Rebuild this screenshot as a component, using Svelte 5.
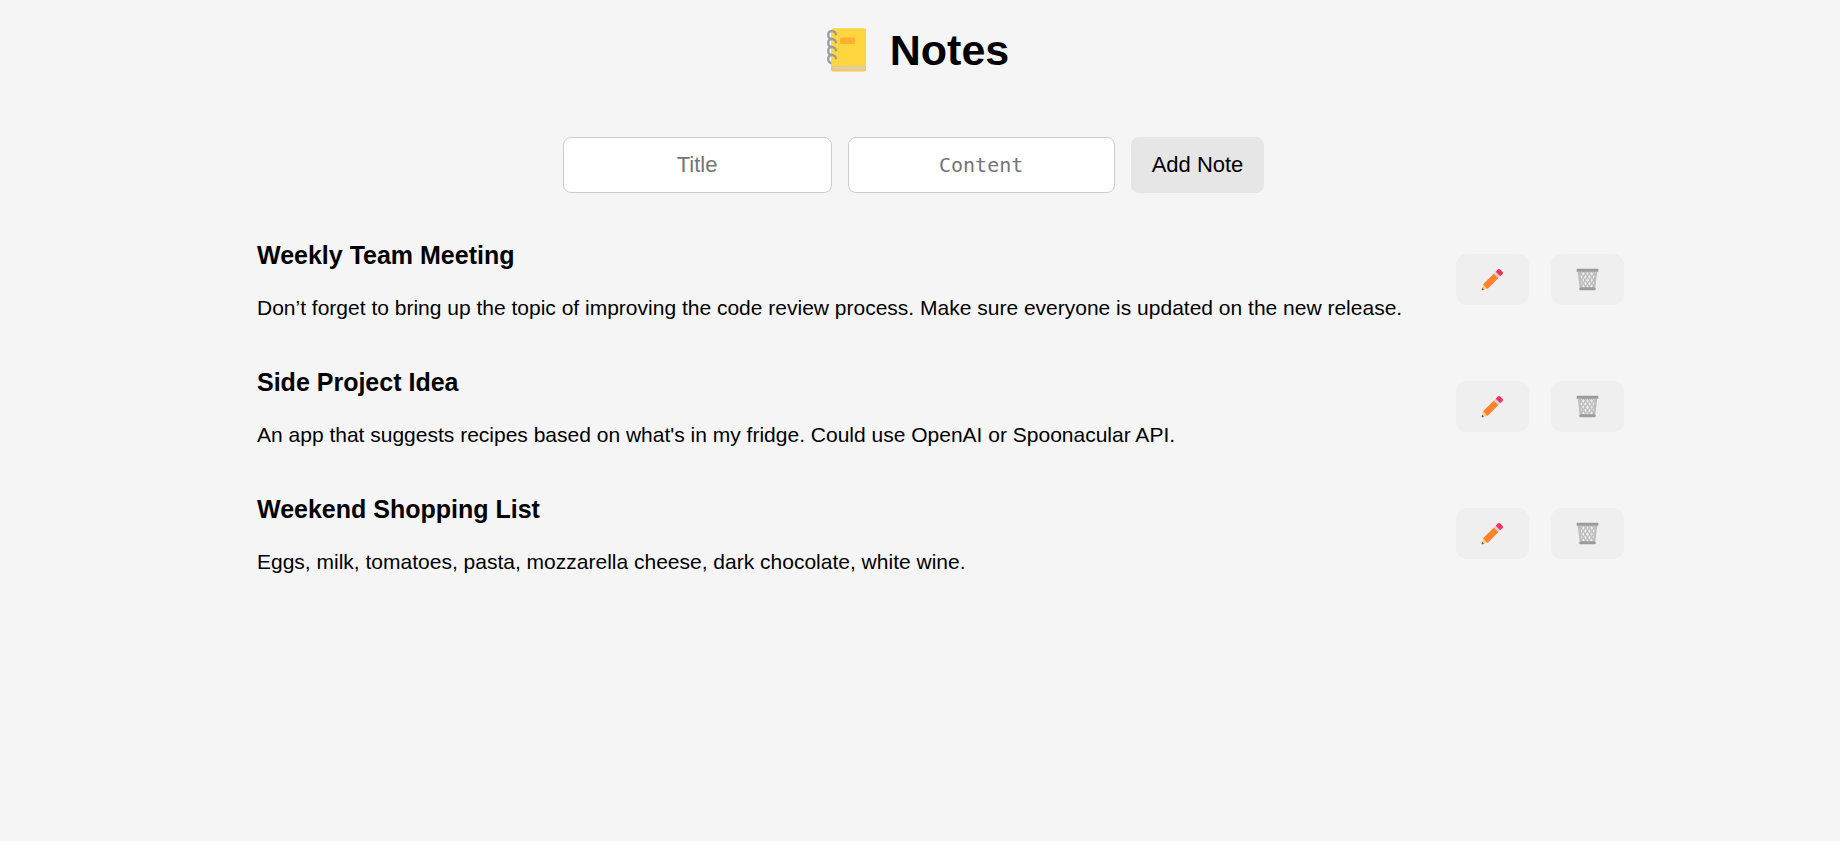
<script>
  let title = $state('');
  let content = $state('');
  let notes = $state([
    { id: 1, title: 'Weekly Team Meeting', content: 'Don’t forget to bring up the topic of improving the code review process. Make sure everyone is updated on the new release.' },
    { id: 2, title: 'Side Project Idea', content: "An app that suggests recipes based on what's in my fridge. Could use OpenAI or Spoonacular API." },
    { id: 3, title: 'Weekend Shopping List', content: 'Eggs, milk, tomatoes, pasta, mozzarella cheese, dark chocolate, white wine.' }
  ]);

  function addNote(event) {
    event.preventDefault();
    if (!title && !content) return;
    notes.push({ id: Date.now(), title, content });
    title = '';
    content = '';
  }

  function editNote(note) {
    title = note.title;
    content = note.content;
    removeNote(note);
  }

  function removeNote(note) {
    notes = notes.filter((n) => n.id !== note.id);
  }
</script>

<main>
  <h1>
    <svg class="book" viewBox="0 0 40 44" aria-hidden="true">
      <rect x="4" y="0.5" width="35" height="43" rx="2" fill="#fcc64b" />
      <path d="M6 .5H37Q39 .5 39 2.500V38H4V2.500Q4 .5 6 .5Z" fill="#ffd640" />
      <path d="M5 38.800H38V41.200H7Q5 41.200 5 38.800Z" fill="#d0cfce" />
      <rect x="13" y="9.500" width="15" height="6.500" rx="1.500" fill="#ffb02e" />
      <g fill="none" stroke="#9b9b9b" stroke-width="2.200" stroke-linecap="round">
        <path d="M9 6.500C8 2 1.200 2 1.200 7C1.200 9 2.200 10.300 4 10.800" />
        <path d="M9 14.500C8 10 1.200 10 1.200 15C1.200 17 2.200 18.300 4 18.800" />
        <path d="M9 22.500C8 18 1.200 18 1.200 23C1.200 25 2.200 26.300 4 26.800" />
        <path d="M9 30.500C8 26 1.200 26 1.200 31C1.200 33 2 34.300 3.500 35" />
      </g>
    </svg>
    Notes
  </h1>

  <form onsubmit={addNote}>
    <input type="text" placeholder="Title" aria-label="Title" bind:value={title} />
    <textarea rows="1" placeholder="Content" aria-label="Content" bind:value={content}></textarea>
    <button class="add" type="submit">Add Note</button>
  </form>

  <ul>
    {#each notes as note (note.id)}
      <li>
        <div class="text">
          <h2>{note.title}</h2>
          <p>{note.content}</p>
        </div>
        <button class="tool" type="button" aria-label="Edit note" onclick={() => editNote(note)}>
          <svg viewBox="0 0 24 24" aria-hidden="true">
            <path d="M2.300 17L6.800 21.500L1.600 23.200Q.5 23.500 .8 22.400Z" fill="#ffce7c" />
            <path d="M1.300 20.700L3 22.600L1.600 23.200Q.5 23.500 .8 22.400Z" fill="#555" />
            <path d="M13.500 5.700L18.200 10.500L6.800 21.800L2.100 17Z" fill="#ff822d" />
            <path d="M15.300 3.900L20 8.700L18.200 10.500L13.500 5.700Z" fill="#d3d3d3" />
            <path d="M15.300 3.900L17.800 1.400Q18.800.5 19.800 1.400L22.600 4.200Q23.500 5.200 22.600 6.200L20 8.700Z" fill="#f92f60" />
          </svg>
        </button>
        <button class="tool" type="button" aria-label="Delete note" onclick={() => removeNote(note)}>
          <svg viewBox="0 0 24 24" aria-hidden="true">
            <g fill="none" stroke="#bebebe" stroke-width="1.500">
              <path d="M4 8L8 3M4.500 14L12 3M5 20L16 3M9 21L20 4M13 21L20 10M17 21L19.500 17" />
              <path d="M20 8L16 3M19.500 14L12 3M19 20L8 3M15 21L4 4M11 21L4 10M7 21L4.500 17" />
            </g>
            <path d="M3 4L5 20M21 4L19 20" stroke="#bebebe" stroke-width="2.400" />
            <rect x="0.600" y="0.800" width="22.800" height="3.200" rx="1" fill="#9b9b9b" />
            <rect x="3.500" y="20" width="17" height="3.200" rx="1" fill="#9b9b9b" />
          </svg>
        </button>
      </li>
    {/each}
  </ul>
</main>

<style>
  :global(body) {
    background: #f5f5f5;
  }

  main {
    color: #000;
    font: 22px/26px "Liberation Sans", Arial, sans-serif;
  }

  h1 {
    display: flex;
    align-items: center;
    justify-content: center;
    gap: 23px;
    margin: 0;
    padding: 25px 4px 0 0;
    font-size: 43px;
    line-height: 50px;
  }

  .book {
    width: 40px;
    height: 44px;
  }

  form {
    display: flex;
    justify-content: center;
    gap: 16px;
    padding: 62px 13px 0 0;
  }

  input,
  textarea,
  button {
    box-sizing: border-box;
    margin: 0;
    border: 0;
    border-radius: 8px;
    font: inherit;
  }

  input,
  textarea {
    height: 56px;
    padding: 14px 16px;
    border: 1px solid #ccc;
    background: #fff;
    text-align: center;
    resize: none;
    overflow: hidden;
  }

  input {
    width: 269px;
  }

  textarea {
    width: 267px;
    font-family: "DejaVu Sans Mono", monospace;
    font-size: 20px;
  }

  input::placeholder,
  textarea::placeholder {
    color: #757575;
  }

  button {
    color: #000;
    cursor: pointer;
  }

  .add {
    padding: 0 21px;
    background: #e6e6e6;
  }

  ul {
    box-sizing: border-box;
    max-width: 1408px;
    margin: 0 auto;
    padding: 47px 0 0 41px;
    list-style: none;
  }

  li {
    display: flex;
    align-items: flex-start;
    gap: 22px;
    padding-bottom: 46px;
  }

  .text {
    flex: 1;
  }

  h2 {
    margin: 0 0 25px;
    font-size: 25px;
    line-height: 30px;
  }

  p {
    margin: 0;
    font-size: 21px;
  }

  .tool {
    display: flex;
    align-items: center;
    justify-content: center;
    width: 73px;
    height: 51px;
    margin-top: 14px;
    padding: 0;
    border-radius: 11px;
    background: #efefef;
  }

  .tool svg {
    width: 23px;
    height: 23px;
  }
</style>
